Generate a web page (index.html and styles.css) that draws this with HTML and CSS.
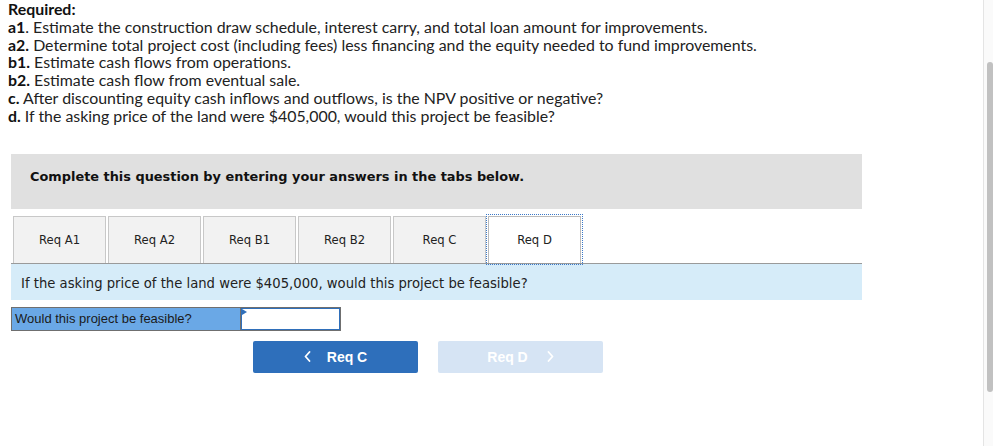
FILE: index.html
```html
<!DOCTYPE html>
<html>
<head>
<meta charset="utf-8">
<link rel="stylesheet" href="styles.css">
</head>
<body>
<div class="page">
  <main class="main">
    <div class="required">
      <div class="line"><b>Required:</b></div>
      <div class="line"><b>a1</b>. Estimate the construction draw schedule, interest carry, and total loan amount for improvements.</div>
      <div class="line"><b>a2.</b> Determine total project cost (including fees) less financing and the equity needed to fund improvements.</div>
      <div class="line"><b>b1.</b> Estimate cash flows from operations.</div>
      <div class="line"><b>b2.</b> Estimate cash flow from eventual sale.</div>
      <div class="line"><b>c.</b> After discounting equity cash inflows and outflows, is the NPV positive or negative?</div>
      <div class="line"><b>d.</b> If the asking price of the land were $405,000, would this project be feasible?</div>
    </div>
    <div class="question">
      <div class="banner">Complete this question by entering your answers in the tabs below.</div>
      <div class="tabs">
        <div class="tab">Req A1</div>
        <div class="tab">Req A2</div>
        <div class="tab">Req B1</div>
        <div class="tab">Req B2</div>
        <div class="tab">Req C</div>
        <div class="tab active">Req D</div>
      </div>
      <div class="panel">If the asking price of the land were $405,000, would this project be feasible?</div>
      <div class="answer">
        <div class="label">Would this project be feasible?</div>
        <div class="input"><span class="tri"></span></div>
      </div>
      <div class="nav">
        <div class="btn prev"><svg class="chev" width="7" height="11" viewBox="0 0 7 11"><path d="M5.5 1 L1.5 5.5 L5.5 10" fill="none" stroke="#fff" stroke-width="1.8" stroke-linecap="round" stroke-linejoin="round"/></svg><span>Req C</span></div>
        <div class="btn next"><span>Req D</span><svg class="chev" width="7" height="11" viewBox="0 0 7 11"><path d="M1.5 1 L5.5 5.5 L1.5 10" fill="none" stroke="#fff" stroke-width="1.8" stroke-linecap="round" stroke-linejoin="round"/></svg></div>
      </div>
    </div>
  </main>
  <aside class="scrollbar"><div class="thumb"></div></aside>
</div>
</body>
</html>
```
FILE: styles.css
```css
html, body {
  margin: 0;
  padding: 0;
  background: #ffffff;
}
.page {
  display: flex;
  width: 993px;
  height: 446px;
  overflow: hidden;
}
.main {
  flex: 1;
  min-width: 0;
}
.required {
  padding: 0 0 0 8px;
  font-family: Lato, "Open Sans", sans-serif;
  font-size: 15.9px;
  line-height: 17.8px;
  color: #222;
}
.required b {
  color: #111;
  font-weight: 700;
}
.question {
  margin: 29px 0 0 11px;
  width: 851px;
}
.banner {
  background: #e0e0e0;
  height: 55px;
  box-sizing: border-box;
  padding: 15px 0 0 19px;
  font-family: "DejaVu Sans", Verdana, sans-serif;
  font-weight: 700;
  font-size: 12.9px;
  line-height: 16px;
  color: #111;
}
.tabs {
  display: flex;
  gap: 2px;
  margin-top: 7px;
  padding-left: 2px;
}
.tab {
  width: 91px;
  height: 46px;
  border: 1px solid #c8c8c8;
  border-bottom: none;
  background: #f2f2f2;
  display: flex;
  align-items: center;
  justify-content: center;
  font-family: "DejaVu Sans", Verdana, sans-serif;
  font-size: 11.6px;
  color: #222;
}
.tab.active {
  background: #fff;
  border-color: #bbb;
  outline: 1px dotted #3a78c8;
  outline-offset: 1px;
  position: relative;
  z-index: 1;
}
.panel {
  border-top: 1px solid #9a9a9a;
  background: #d6ecf9;
  height: 33px;
  padding: 3px 0 0 10px;
  display: flex;
  align-items: center;
  font-family: "DejaVu Sans", Verdana, sans-serif;
  font-size: 13.2px;
  color: #222;
}
.answer {
  display: flex;
  margin-top: 7px;
  width: 328px;
  height: 22px;
  border: 1px solid #6f6f6f;
}
.label {
  background: #6aa8e6;
  border-right: 1px solid #6f6f6f;
  display: flex;
  align-items: center;
  padding-left: 3px;
  box-sizing: border-box;
  width: 229px;
  font-family: "Liberation Sans", Arial, sans-serif;
  font-size: 13px;
  color: #1a1a1a;
}
.input {
  flex: 1;
  border: 1px solid #2f6fba;
  background: #fff;
  position: relative;
}
.tri {
  position: absolute;
  left: 0;
  top: 0;
  width: 0;
  height: 0;
  border-top: 3px solid transparent;
  border-bottom: 3px solid transparent;
  border-left: 5px solid #2f6fba;
}
.nav {
  display: flex;
  gap: 20px;
  margin: 10px 0 0 242px;
}
.btn {
  width: 165px;
  height: 32px;
  border-radius: 2px;
  display: flex;
  align-items: center;
  justify-content: center;
  gap: 16px;
  font-family: "Liberation Sans", Arial, sans-serif;
  font-weight: 700;
  font-size: 14px;
  color: #fff;
}
.btn .chev {
  display: block;
}
.prev {
  background: #2e6fbb;
}
.next {
  background: #d6e4f4;
  gap: 19px;
}
.scrollbar {
  width: 9px;
  border-left: 1px solid #e4e4e4;
  background: #fafafa;
  display: flex;
  flex-direction: column;
  padding-top: 62px;
}
.thumb {
  width: 6px;
  height: 330px;
  margin-left: 3px;
  background: #c1c1c1;
  border-radius: 3px;
}
```
